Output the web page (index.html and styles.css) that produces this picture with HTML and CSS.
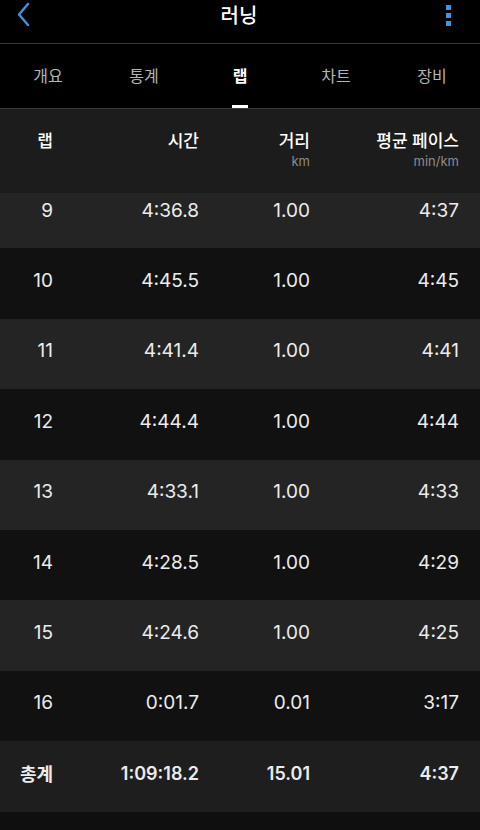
FILE: index.html
```html
<!DOCTYPE html>
<html lang="ko">
<head>
    <meta charset="UTF-8">
    <meta name="viewport" content="width=device-width, initial-scale=1.0">
    <title>러닝</title>
    <link rel="stylesheet" href="styles.css">
</head>
<body>
    <header class="topbar">
        <div class="topbar-row">
            <svg class="back" width="16" height="24" viewBox="0 0 16 24">
                <path d="M12 2 L3 12.5 L12 23" fill="none" stroke="#4a8fe0" stroke-width="2.4" stroke-linecap="round" stroke-linejoin="round"/>
            </svg>
            <h1>러닝</h1>
            <div class="kebab"><span></span><span></span><span></span></div>
        </div>
    </header>

    <nav class="tabs">
        <div class="tab">개요</div>
        <div class="tab">통계</div>
        <div class="tab active">랩</div>
        <div class="tab">차트</div>
        <div class="tab">장비</div>
    </nav>

    <div class="laps-head">
        <div class="cell">랩</div>
        <div class="cell">시간</div>
        <div class="cell">거리<small>km</small></div>
        <div class="cell">평균 페이스<small>min/km</small></div>
    </div>

    <div class="laps">
        <div class="laps-list">
            <div class="row odd"><div class="cell">9</div><div class="cell">4:36.8</div><div class="cell">1.00</div><div class="cell">4:37</div></div>
            <div class="row"><div class="cell">10</div><div class="cell">4:45.5</div><div class="cell">1.00</div><div class="cell">4:45</div></div>
            <div class="row odd"><div class="cell">11</div><div class="cell">4:41.4</div><div class="cell">1.00</div><div class="cell">4:41</div></div>
            <div class="row"><div class="cell">12</div><div class="cell">4:44.4</div><div class="cell">1.00</div><div class="cell">4:44</div></div>
            <div class="row odd"><div class="cell">13</div><div class="cell">4:33.1</div><div class="cell">1.00</div><div class="cell">4:33</div></div>
            <div class="row"><div class="cell">14</div><div class="cell">4:28.5</div><div class="cell">1.00</div><div class="cell">4:29</div></div>
            <div class="row odd"><div class="cell">15</div><div class="cell">4:24.6</div><div class="cell">1.00</div><div class="cell">4:25</div></div>
            <div class="row"><div class="cell">16</div><div class="cell">0:01.7</div><div class="cell">0.01</div><div class="cell">3:17</div></div>
            <div class="row total"><div class="cell">총계</div><div class="cell">1:09:18.2</div><div class="cell">15.01</div><div class="cell">4:37</div></div>
        </div>
    </div>
</body>
</html>
```

FILE: styles.css
```css
body {
    font-family: Inter, "Noto Sans CJK KR", sans-serif;
    background-color: #0f0f0f;
    color: #f2f2f2;
    margin: 0;
    padding: 0;
    width: 480px;
    height: 830px;
    overflow: hidden;
}
.topbar {
    background: #000;
    height: 43px;
    border-bottom: 1px solid #3a3a3a;
}
.topbar-row {
    height: 28px;
    display: flex;
    align-items: center;
    justify-content: space-between;
    padding: 0 29px 0 16px;
}
.topbar h1 {
    margin: 0;
    font-size: 20px;
    font-weight: 500;
    color: #fff;
}
.back {
    display: block;
}
.kebab {
    display: flex;
    flex-direction: column;
    gap: 3px;
    padding-top: 2px;
}
.kebab span {
    width: 5px;
    height: 5px;
    background: #4a8fe0;
}
.tabs {
    background: #000;
    height: 64px;
    display: grid;
    grid-template-columns: repeat(5, 1fr);
    border-bottom: 1px solid #3a3a3a;
}
.tab {
    display: flex;
    align-items: center;
    justify-content: center;
    font-size: 16px;
    color: #b5b5b5;
    position: relative;
    padding-bottom: 2px;
}
.tab.active {
    color: #fff;
    font-weight: 700;
}
.tab.active::after {
    content: "";
    position: absolute;
    bottom: 0;
    left: 50%;
    margin-left: -8px;
    width: 16px;
    height: 3px;
    background: #fff;
}
.laps-head, .row {
    display: grid;
    grid-template-columns: 53px 146px 111px 149px;
}
.laps-head {
    background: #1c1c1c;
    height: 84px;
    box-sizing: border-box;
    padding-top: 20px;
    position: relative;
    z-index: 1;
}
.laps-head .cell {
    text-align: right;
    font-size: 17px;
    font-weight: 500;
    color: #fff;
    line-height: 24px;
}
.laps-head small {
    display: block;
    font-size: 13px;
    font-weight: 400;
    color: #8c8c8c;
    line-height: 16px;
}
.laps {
    height: 637px;
    overflow: hidden;
}
.laps-list {
    margin-top: -15px;
}
.row {
    height: 70.4px;
    box-sizing: border-box;
    padding-bottom: 6px;
    align-items: center;
    background: #111;
}
.row.odd {
    background: #242424;
}
.row .cell {
    text-align: right;
    font-size: 19px;
    color: #ececec;
}
.row.total {
    background: #1e1e1e;
}
.row.total .cell {
    font-weight: 600;
    font-size: 18px;
}
```
